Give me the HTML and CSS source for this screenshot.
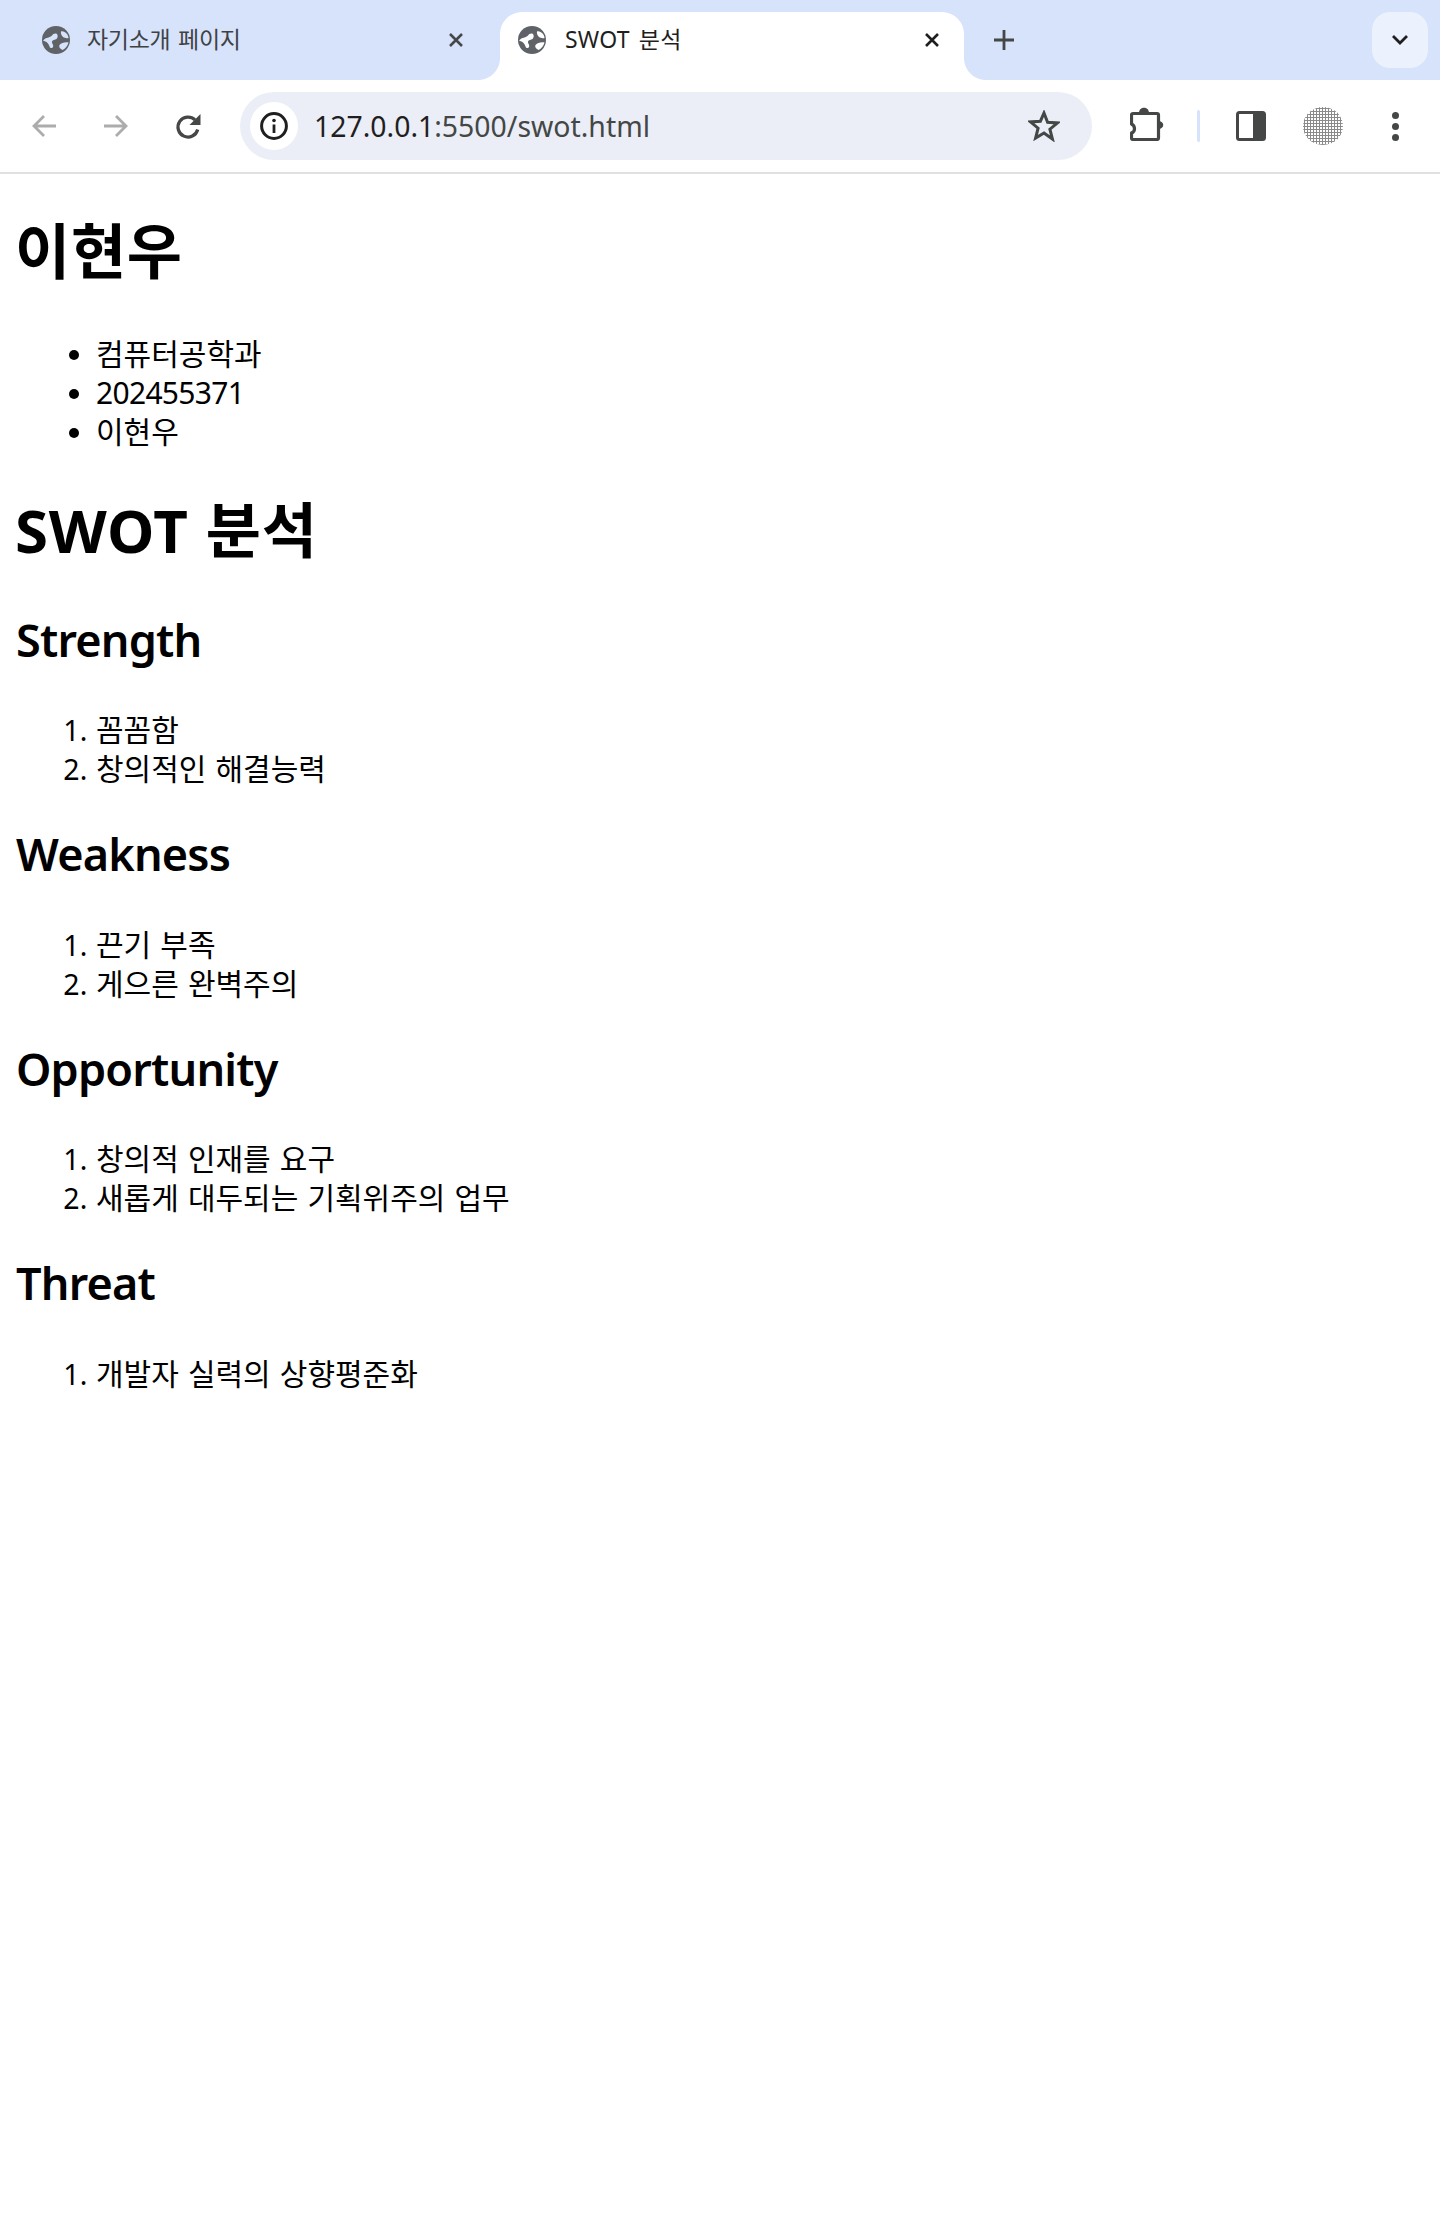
FILE: index.html
```html
<!DOCTYPE html>
<html lang="ko">
  <head>
    <meta charset="UTF-8" />
    <meta name="viewport" content="width=device-width, initial-scale=1.0" />
    <title>SWOT 분석</title>
    <link rel="stylesheet" href="styles.css">
  </head>
  <body>
    <div class="tabstrip">
      <div class="tab">
        <svg class="globe" viewBox="0 0 28 28"><circle cx="14" cy="14" r="14" fill="#5f6368"/><path d="M1 14.500C4 11 8 12 10 9.500c1-1.500 3-2.500 5-1.500 1 1.500 1 3.500-.5 5-1.500 1-4 1-4.500 2.500-.5 2 2 3 1 5.500-.5 1-2 1.500-3 .5-1-2-1.500-4-3.500-5.500C3.500 15.500 2 15 1 14.500zM19 5.500c2-.5 4 .5 6 2.500 1 1.500 1.500 3 1.500 4-2 .5-4 0-5.500-1-1.500-1.500-2.500-3.500-2-5.500zM17.500 19c2-2 5-3 9-2.500-1 3.500-3 6-6 7.500-2-1-4-3-3-5z" fill="#d7e3fb"/></svg>
        <span class="tab-title">자기소개 페이지</span>
        <svg class="tab-close" viewBox="0 0 16 16"><path d="M2 2l12 12M14 2L2 14" stroke="#45474a" stroke-width="2.6" fill="none"/></svg>
      </div>
      <div class="tab active">
        <svg class="globe" viewBox="0 0 28 28"><circle cx="14" cy="14" r="14" fill="#5f6368"/><path d="M1 14.500C4 11 8 12 10 9.500c1-1.500 3-2.500 5-1.500 1 1.500 1 3.500-.5 5-1.500 1-4 1-4.500 2.500-.5 2 2 3 1 5.500-.5 1-2 1.500-3 .5-1-2-1.500-4-3.500-5.500C3.500 15.500 2 15 1 14.500zM19 5.500c2-.5 4 .5 6 2.500 1 1.500 1.500 3 1.500 4-2 .5-4 0-5.500-1-1.500-1.500-2.500-3.500-2-5.500zM17.500 19c2-2 5-3 9-2.500-1 3.500-3 6-6 7.500-2-1-4-3-3-5z" fill="#fff"/></svg>
        <span class="tab-title">SWOT 분석</span>
        <svg class="tab-close" viewBox="0 0 16 16"><path d="M2 2l12 12M14 2L2 14" stroke="#1f1f1f" stroke-width="2.6" fill="none"/></svg>
      </div>
      <svg class="new-tab" viewBox="0 0 20 20"><path d="M10 0v20M0 10h20" stroke="#444746" stroke-width="2.8" fill="none"/></svg>
      <div class="tab-search">
        <svg viewBox="0 0 16 10" width="16" height="10"><path d="M1 1l7 7 7-7" stroke="#1f1f1f" stroke-width="2.8" fill="none"/></svg>
      </div>
    </div>

    <div class="toolbar">
      <svg class="nav-icon" viewBox="0 0 24 24"><path d="M24 12H2M12 2L2 12l10 10" stroke="#acacac" stroke-width="2.8" fill="none"/></svg>
      <svg class="nav-icon" viewBox="0 0 24 24"><path d="M0 12h22M12 2l10 10-10 10" stroke="#acacac" stroke-width="2.8" fill="none"/></svg>
      <svg class="nav-icon reload" viewBox="0 0 24 24"><path d="M21.700 15.500A10 10 0 1 1 19 5.900" stroke="#444746" stroke-width="3.200" fill="none"/><path d="M24.500 0v11h-11z" fill="#444746"/></svg>
      <div class="omnibox">
        <div class="site-info">
          <svg viewBox="0 0 28 28" width="28" height="28"><circle cx="14" cy="14" r="12.400" stroke="#1f1f1f" stroke-width="3" fill="none"/><path d="M14 12.500V21" stroke="#1f1f1f" stroke-width="2.800"/><circle cx="14" cy="8.500" r="1.800" fill="#1f1f1f"/></svg>
        </div>
        <div class="url"><span class="host">127.0.0.1</span>:5500/swot.html</div>
        <svg class="star" viewBox="0 0 32 32"><path d="M16 3l3.600 9.200 10 .7-7.700 6.300 2.500 9.800L16 23l-8.400 5 2.500-9.800-7.700-6.300 10-.7z" stroke="#444746" stroke-width="3" fill="none"/></svg>
      </div>
      <svg class="ext" viewBox="0 0 34 34"><path d="M3 6.500h24A1.500 1.500 0 0 1 28.500 8v23a1.500 1.500 0 0 1-1.500 1.500H3A1.500 1.500 0 0 1 1.500 31v-5c4-1.500 4-7 0-9V8A1.500 1.500 0 0 1 3 6.500z" stroke="#444746" stroke-width="3.200" fill="#fff" stroke-linejoin="round"/><path d="M9 6c0-7 10-7 10 0zM28 14c7 0 7 8 0 8z" fill="#444746"/></svg>
      <div class="divider"></div>
      <svg class="panel" viewBox="0 0 30 30"><rect x="1.500" y="1.500" width="27" height="27" rx="2" stroke="#444746" stroke-width="3" fill="#fff"/><rect x="17" y="2" width="12" height="26" fill="#444746"/></svg>
      <div class="avatar"></div>
      <div class="menu"><i></i><i></i><i></i></div>
    </div>

    <div class="page">
      <h1>이현우</h1>
      <ul>
        <li>컴퓨터공학과</li>
        <li class="digits">202455371</li>
        <li>이현우</li>
      </ul>
      <h1>SWOT 분석</h1>
      <h2>Strength</h2>
      <ol>
        <li>꼼꼼함</li>
        <li>창의적인 해결능력</li>
      </ol>
      <h2>Weakness</h2>
      <ol>
        <li>끈기 부족</li>
        <li>게으른 완벽주의</li>
      </ol>
      <h2>Opportunity</h2>
      <ol>
        <li>창의적 인재를 요구</li>
        <li>새롭게 대두되는 기획위주의 업무</li>
      </ol>
      <h2>Threat</h2>
      <ol>
        <li>개발자 실력의 상향평준화</li>
      </ol>
    </div>
  </body>
</html>
```

FILE: styles.css
```css
* {
  box-sizing: border-box;
}

html,
body {
  margin: 0;
  padding: 0;
  background: #fff;
}

body {
  font-family: "Noto Sans", "Noto Sans CJK KR", sans-serif;
  color: #000;
}

svg {
  display: block;
  flex: none;
}

.tabstrip {
  height: 80px;
  background: #d7e3fb;
  display: flex;
  align-items: flex-end;
  padding-left: 12px;
}

.tab {
  position: relative;
  width: 488px;
  height: 68px;
  padding: 0 36px 12px 30px;
  display: flex;
  align-items: center;
  border-radius: 22px 22px 0 0;
}

.tab.active {
  width: 464px;
  padding-left: 18px;
  padding-right: 24px;
  background: #fff;
}

.tab.active::before,
.tab.active::after {
  content: "";
  position: absolute;
  bottom: 0;
  width: 22px;
  height: 22px;
}

.tab.active::before {
  left: -22px;
  background: radial-gradient(circle at 0 0, #d7e3fb 21.5px, #fff 22.5px);
}

.tab.active::after {
  right: -22px;
  background: radial-gradient(circle at 100% 0, #d7e3fb 21.5px, #fff 22.5px);
}

.globe {
  width: 28px;
  height: 28px;
}

.tab-title {
  flex: 1;
  margin: 0 0 5px 17px;
  font-size: 23px;
  letter-spacing: -0.3px;
  word-spacing: 2px;
  color: #3f4245;
  white-space: nowrap;
}

.tab.active .tab-title {
  margin-left: 19px;
  letter-spacing: 0.2px;
  word-spacing: 3px;
  color: #1f1f1f;
}

.tab-close {
  width: 16px;
  height: 16px;
}

.new-tab {
  width: 20px;
  height: 20px;
  margin: 0 0 30px 30px;
}

.tab-search {
  width: 56px;
  height: 56px;
  margin: 0 12px 12px auto;
  border-radius: 18px;
  background: #ebf1fd;
  display: flex;
  align-items: center;
  justify-content: center;
}

.toolbar {
  height: 94px;
  padding: 12px 0 12px 32px;
  background: #fff;
  border-top-left-radius: 20px;
  border-top-right-radius: 20px;
  border-bottom: 2px solid #dfe0e2;
  display: flex;
  align-items: center;
}

.nav-icon {
  width: 24px;
  height: 24px;
  margin-right: 48px;
  overflow: visible;
}

.omnibox {
  width: 852px;
  height: 68px;
  margin-left: -8px;
  padding: 0 19px 0 10px;
  border-radius: 34px;
  background: #ebeef7;
  display: flex;
  align-items: center;
}

.site-info {
  width: 48px;
  height: 48px;
  border-radius: 50%;
  background: #fff;
  display: flex;
  align-items: center;
  justify-content: center;
}

.url {
  flex: 1;
  margin-left: 16px;
  font-size: 28.4px;
  color: #444746;
  white-space: nowrap;
}

.host {
  color: #1f1f1f;
}

.star {
  width: 32px;
  height: 32px;
  margin-right: 13px;
}

.ext {
  width: 34px;
  height: 34px;
  margin: -4px 0 0 38px;
}

.divider {
  width: 3px;
  height: 32px;
  margin-left: 33px;
  border-radius: 2px;
  background: #d7e3fb;
}

.panel {
  width: 30px;
  height: 30px;
  margin-left: 36px;
}

.avatar {
  width: 40px;
  height: 38px;
  margin-left: 37px;
  border-radius: 50%;
  background-color: #fff;
  background-image: radial-gradient(circle, #8a8a8a 1px, transparent 1.2px);
  background-size: 3px 3px;
}

.menu {
  margin-left: 49px;
  display: flex;
  flex-direction: column;
  gap: 4px;
}

.menu i {
  display: block;
  width: 7px;
  height: 7px;
  border-radius: 50%;
  background: #444746;
}

.page {
  padding: 0 16px;
}

h1 {
  margin: 36px 0 38.5px -1px;
  font-size: 60px;
  line-height: 82px;
  font-weight: 700;
  letter-spacing: 0.7px;
  word-spacing: 1px;
}

h2 {
  margin: 36px 0 40.5px;
  font-size: 45px;
  line-height: 60px;
  font-weight: 600;
  letter-spacing: -0.8px;
}

ul {
  margin: 42px 0 38px;
  padding-left: 80px;
}

ol {
  margin: 40.5px 0 0;
  padding-left: 80px;
}

li {
  font-size: 30px;
  line-height: 39px;
  word-spacing: 1.3px;
}

li::marker {
  font-size: 28.5px;
}

li.digits {
  letter-spacing: -0.7px;
}
```
